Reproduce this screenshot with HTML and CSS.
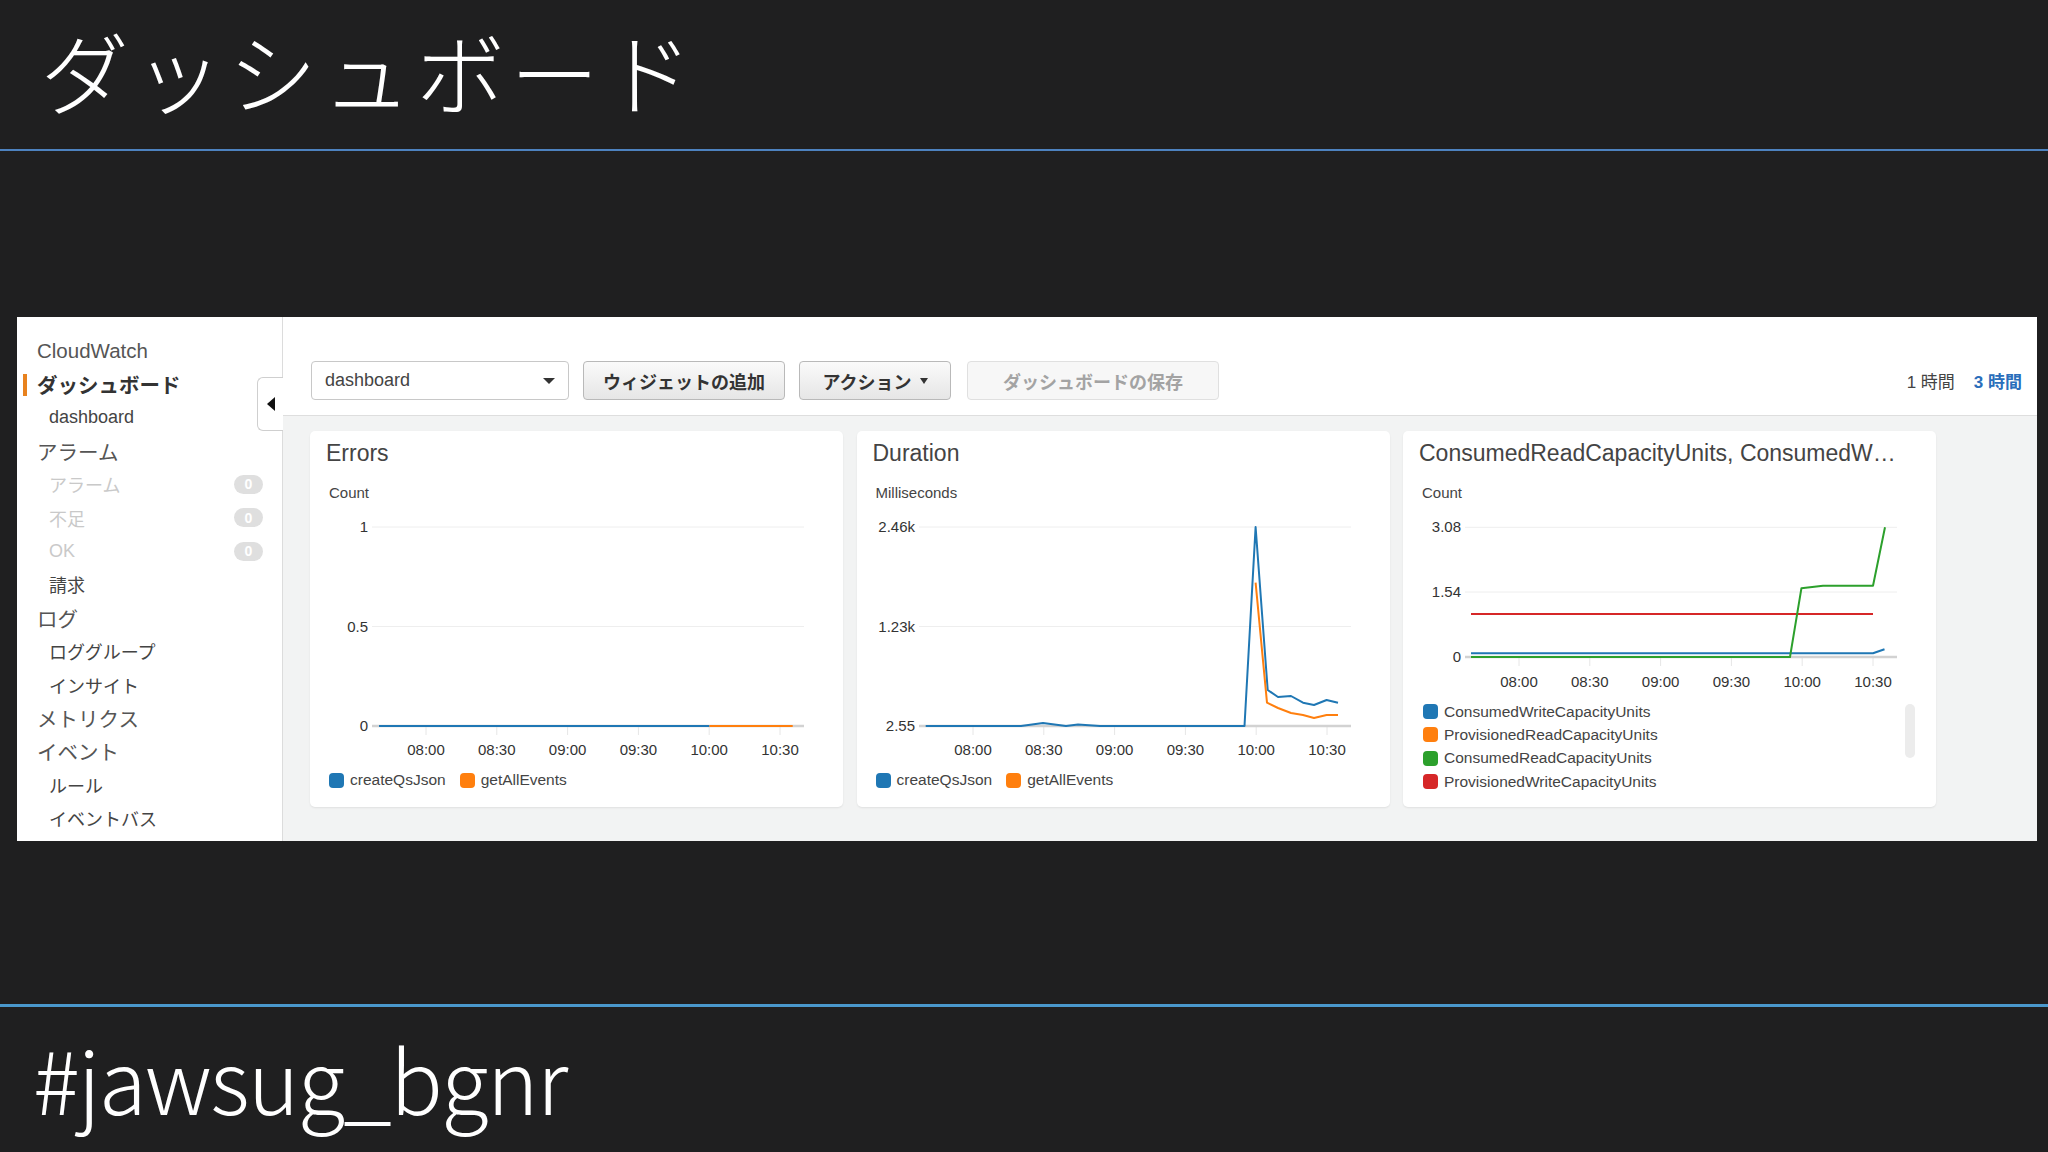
FILE: index.html
```html
<!DOCTYPE html>
<html lang="ja">
<head>
<meta charset="utf-8">
<title>ダッシュボード</title>
<link rel="stylesheet" href="styles.css">
</head>
<body>
<div class="slide">
  <header class="slide-head"><h1 class="slide-title">ダッシュボード</h1></header>
  <div class="rule rule-top"></div>
  <main class="stage">
    <div class="console">
      <nav class="sidebar">
        <div class="nav-item top">CloudWatch</div>
        <div class="nav-item top active">ダッシュボード</div>
        <div class="nav-item sub">dashboard</div>
        <div class="nav-item top">アラーム</div>
        <div class="nav-item sub muted">アラーム<span class="badge">0</span></div>
        <div class="nav-item sub muted">不足<span class="badge">0</span></div>
        <div class="nav-item sub muted">OK<span class="badge">0</span></div>
        <div class="nav-item sub">請求</div>
        <div class="nav-item top">ログ</div>
        <div class="nav-item sub">ロググループ</div>
        <div class="nav-item sub">インサイト</div>
        <div class="nav-item top">メトリクス</div>
        <div class="nav-item top">イベント</div>
        <div class="nav-item sub">ルール</div>
        <div class="nav-item sub">イベントバス</div>
        <div class="collapse-tab"><span class="tri"></span></div>
      </nav>
      <section class="main">
        <div class="toolbar">
          <div class="select">dashboard<span class="caret"></span></div>
          <button class="btn btn-add">ウィジェットの追加</button>
          <button class="btn btn-action">アクション<span class="caret-sm"></span></button>
          <button class="btn btn-save" disabled>ダッシュボードの保存</button>
          <div class="range"><span>1 時間</span><span class="on">3 時間</span></div>
        </div>
        <div class="widgets">
          <div class="card">
            <div class="card-title">Errors</div>
            <div class="card-unit">Count</div>
            <svg class="chart" width="533" height="260" viewBox="0 0 533 260">
              <g class="grid"><line x1="62" x2="494" y1="21" y2="21"/><line x1="62" x2="494" y1="120.5" y2="120.5"/></g>
              <g class="ticks"><line x1="116" x2="116" y1="221" y2="229"/><line x1="186.8" x2="186.8" y1="221" y2="229"/><line x1="257.6" x2="257.6" y1="221" y2="229"/><line x1="328.4" x2="328.4" y1="221" y2="229"/><line x1="399.2" x2="399.2" y1="221" y2="229"/><line x1="470" x2="470" y1="221" y2="229"/></g>
              <line class="axis" x1="62" x2="494" y1="220" y2="220"/>
              <g class="ylab"><text x="58" y="26">1</text><text x="58" y="125.5">0.5</text><text x="58" y="225">0</text></g>
              <g class="xlab"><text x="116" y="249">08:00</text><text x="186.8" y="249">08:30</text><text x="257.6" y="249">09:00</text><text x="328.4" y="249">09:30</text><text x="399.2" y="249">10:00</text><text x="470" y="249">10:30</text></g>
              <path class="s-blue" d="M69,220 H399.5"/>
              <path class="s-orange" d="M399.5,220 H482.7"/>
            </svg>
            <div class="legend">
              <span class="lg"><i class="sw c-blue"></i>createQsJson</span>
              <span class="lg"><i class="sw c-orange"></i>getAllEvents</span>
            </div>
          </div>
          <div class="card">
            <div class="card-title">Duration</div>
            <div class="card-unit">Milliseconds</div>
            <svg class="chart" width="533" height="260" viewBox="0 0 533 260">
              <g class="grid"><line x1="62" x2="494" y1="21" y2="21"/><line x1="62" x2="494" y1="120.5" y2="120.5"/></g>
              <g class="ticks"><line x1="116" x2="116" y1="221" y2="229"/><line x1="186.8" x2="186.8" y1="221" y2="229"/><line x1="257.6" x2="257.6" y1="221" y2="229"/><line x1="328.4" x2="328.4" y1="221" y2="229"/><line x1="399.2" x2="399.2" y1="221" y2="229"/><line x1="470" x2="470" y1="221" y2="229"/></g>
              <line class="axis" x1="62" x2="494" y1="220" y2="220"/>
              <g class="ylab"><text x="58" y="26">2.46k</text><text x="58" y="125.5">1.23k</text><text x="58" y="225">2.55</text></g>
              <g class="xlab"><text x="116" y="249">08:00</text><text x="186.8" y="249">08:30</text><text x="257.6" y="249">09:00</text><text x="328.4" y="249">09:30</text><text x="399.2" y="249">10:00</text><text x="470" y="249">10:30</text></g>
              <path class="s-blue" d="M68.7,220 L164,220 L186,217 L209,220 L221,218.5 L243,220 L387.5,220 L398.6,21 L410.7,184 L421,191 L434,190 L446,196.7 L457,199 L469.6,194 L481,196.7"/>
              <path class="s-orange" d="M398.6,76.7 L410,196.7 L421,202 L434,207 L446,209 L457,212 L469.6,209 L481,209"/>
            </svg>
            <div class="legend">
              <span class="lg"><i class="sw c-blue"></i>createQsJson</span>
              <span class="lg"><i class="sw c-orange"></i>getAllEvents</span>
            </div>
          </div>
          <div class="card">
            <div class="card-title">ConsumedReadCapacityUnits, ConsumedW…</div>
            <div class="card-unit">Count</div>
            <svg class="chart" width="533" height="194" viewBox="0 0 533 194">
              <g class="grid"><line x1="62" x2="494" y1="21.3" y2="21.3"/><line x1="62" x2="494" y1="86" y2="86"/></g>
              <g class="ticks"><line x1="116" x2="116" y1="152" y2="160"/><line x1="186.8" x2="186.8" y1="152" y2="160"/><line x1="257.6" x2="257.6" y1="152" y2="160"/><line x1="328.4" x2="328.4" y1="152" y2="160"/><line x1="399.2" x2="399.2" y1="152" y2="160"/><line x1="470" x2="470" y1="152" y2="160"/></g>
              <line class="axis" x1="62" x2="494" y1="151" y2="151"/>
              <g class="ylab"><text x="58" y="26.3">3.08</text><text x="58" y="91">1.54</text><text x="58" y="156">0</text></g>
              <g class="xlab"><text x="116" y="181">08:00</text><text x="186.8" y="181">08:30</text><text x="257.6" y="181">09:00</text><text x="328.4" y="181">09:30</text><text x="399.2" y="181">10:00</text><text x="470" y="181">10:30</text></g>
              <path class="s-blue" d="M68,147.3 H470 L481.5,143.3"/>
              <path class="s-red" d="M68,108 H470"/>
              <path class="s-green" d="M68,151 H387 L398.4,82.3 L420,79.7 L470,79.7 L482,21.3"/>
            </svg>
            <div class="legend-box">
              <div class="legend-list">
                <span class="lg"><i class="sw c-blue"></i>ConsumedWriteCapacityUnits</span>
                <span class="lg"><i class="sw c-orange"></i>ProvisionedReadCapacityUnits</span>
                <span class="lg"><i class="sw c-green"></i>ConsumedReadCapacityUnits</span>
                <span class="lg"><i class="sw c-red"></i>ProvisionedWriteCapacityUnits</span>
              </div>
              <div class="scroll-thumb"></div>
            </div>
          </div>
        </div>
      </section>
    </div>
  </main>
  <div class="rule rule-bottom"></div>
  <footer class="slide-foot">#jawsug_bgnr</footer>
</div>
</body>
</html>
```

FILE: styles.css
```css
* { box-sizing: border-box; }
html, body { margin: 0; padding: 0; }
body {
  width: 2048px;
  height: 1152px;
  overflow: hidden;
  background: #1f1f20;
  font-family: "Liberation Sans", "Noto Sans CJK JP", sans-serif;
}
.slide {
  width: 2048px;
  height: 1152px;
  display: flex;
  flex-direction: column;
  background: #1f1f20;
}
.slide-head {
  height: 149px;
  flex: none;
  padding: 25px 0 0 40px;
}
.slide-title {
  margin: 0;
  font-family: "Noto Sans CJK JP", sans-serif;
  font-weight: 300;
  font-size: 89px;
  line-height: 89px;
  letter-spacing: 5px;
  color: #ffffff;
}
.rule { flex: none; }
.rule-top { height: 2px; background: #4d82bf; }
.rule-bottom { height: 3px; background: #4a98cc; }
.stage {
  height: 853px;
  flex: none;
  padding: 166px 11px 0 17px;
}
.console {
  width: 2020px;
  height: 524px;
  background: #ffffff;
  display: flex;
}
.slide-foot {
  flex: 1;
  padding: 27px 0 0 33px;
  font-family: "Noto Sans CJK JP", sans-serif;
  font-weight: 300;
  font-size: 87px;
  line-height: 87px;
  letter-spacing: -1.5px;
  color: #ffffff;
}

/* sidebar */
.sidebar {
  position: relative;
  width: 266px;
  flex: none;
  border-right: 1px solid #dcdcdc;
  padding-top: 17px;
}
.nav-item {
  height: 33.4px;
  display: flex;
  align-items: center;
  white-space: nowrap;
  color: #555555;
}
.nav-item.top { padding-left: 20px; font-size: 20.5px; }
.nav-item.sub { padding-left: 32px; font-size: 18px; color: #444444; }
.nav-item.muted { color: #c9c9c9; }
.nav-item.active { position: relative; font-weight: bold; color: #333333; }
.nav-item.active::before {
  content: "";
  position: absolute;
  left: 6px;
  top: 50%;
  margin-top: -10px;
  width: 4px;
  height: 22px;
  background: #e8821e;
}
.badge {
  margin-left: auto;
  margin-right: 19px;
  width: 29px;
  height: 19px;
  border-radius: 10px;
  background: #dfdfdf;
  color: #ffffff;
  font-size: 14px;
  font-weight: bold;
  display: flex;
  align-items: center;
  justify-content: center;
}
.collapse-tab {
  position: absolute;
  left: 240px;
  top: 60px;
  width: 26px;
  height: 54px;
  background: #ffffff;
  border: 1px solid #cfcfcf;
  border-right: none;
  border-radius: 6px 0 0 6px;
  display: flex;
  align-items: center;
  padding-left: 9px;
}
.tri {
  width: 0;
  height: 0;
  border-top: 7px solid transparent;
  border-bottom: 7px solid transparent;
  border-right: 8px solid #111111;
}

/* main */
.main {
  flex: 1;
  min-width: 0;
  display: flex;
  flex-direction: column;
}
.toolbar {
  height: 99px;
  flex: none;
  display: flex;
  align-items: center;
  padding: 44px 15px 15px 28px;
  border-bottom: 1px solid #dedede;
}
.select {
  width: 258px;
  height: 39px;
  border: 1px solid #c8c8c8;
  border-radius: 4px;
  display: flex;
  align-items: center;
  padding: 0 13px;
  font-size: 18px;
  color: #444444;
}
.caret {
  margin-left: auto;
  width: 0;
  height: 0;
  border-left: 6px solid transparent;
  border-right: 6px solid transparent;
  border-top: 6px solid #333333;
}
.btn {
  height: 39px;
  margin-left: 14px;
  padding: 0;
  border: 1px solid #b9b9b9;
  border-radius: 4px;
  background: linear-gradient(#fafafa, #e6e6e6);
  font-family: "Liberation Sans", "Noto Sans CJK JP", sans-serif;
  font-size: 18px;
  font-weight: bold;
  color: #333333;
  display: flex;
  align-items: center;
  justify-content: center;
}
.btn-add { width: 202px; }
.btn-action { width: 152px; gap: 8px; }
.caret-sm {
  width: 0;
  height: 0;
  border-left: 4px solid transparent;
  border-right: 4px solid transparent;
  border-top: 6px solid #333333;
}
.btn-save {
  width: 252px;
  margin-left: 16px;
  color: #a3a3a3;
  background: #f7f7f7;
  border-color: #e0e0e0;
}
.range {
  margin-left: auto;
  display: flex;
  gap: 19px;
  font-size: 17px;
  color: #444444;
}
.range .on { color: #2a6ebb; font-weight: bold; }

.widgets {
  flex: 1;
  background: #f2f3f3;
  display: flex;
  align-items: flex-start;
  gap: 13.5px;
  padding: 15px 0 0 27px;
}
.card {
  width: 533px;
  height: 376px;
  flex: none;
  background: #ffffff;
  border-radius: 5px;
  box-shadow: 0 1px 2px rgba(0, 0, 0, 0.08);
  display: flex;
  flex-direction: column;
}
.card-title {
  padding: 7px 20px 0 16px;
  font-size: 23px;
  line-height: 30px;
  color: #444444;
  white-space: nowrap;
}
.card-unit {
  margin-top: 14px;
  padding-left: 19px;
  font-size: 15px;
  line-height: 22px;
  color: #444444;
}
.chart { display: block; margin-top: 2px; flex: none; }
.chart text {
  font-family: "Liberation Sans", sans-serif;
  font-size: 15px;
  fill: #333333;
}
.ylab text { text-anchor: end; }
.xlab text { text-anchor: middle; }
.grid line { stroke: #eeeeee; stroke-width: 1; }
.ticks line { stroke: #e6e6e6; stroke-width: 1; }
.axis { stroke: #d2d2d2; stroke-width: 2.5; }
.chart path { fill: none; stroke-width: 2; stroke-linejoin: round; }
.s-blue { stroke: #1f77b4; }
.s-orange { stroke: #ff7f0e; }
.s-green { stroke: #2ca02c; }
.s-red { stroke: #d62728; }

.legend {
  height: 28px;
  display: flex;
  align-items: center;
  padding-left: 19px;
  font-size: 15.5px;
  color: #444444;
}
.lg { display: flex; align-items: center; margin-right: 14px; white-space: nowrap; }
.sw { width: 15px; height: 15px; border-radius: 4px; margin-right: 6px; flex: none; }
.c-blue { background: #1f77b4; }
.c-orange { background: #ff7f0e; }
.c-green { background: #2ca02c; }
.c-red { background: #d62728; }

.legend-box {
  display: flex;
  align-items: flex-start;
  padding-left: 20px;
  font-size: 15.5px;
  color: #444444;
}
.legend-list { flex: 1; display: flex; flex-direction: column; }
.legend-list .lg { height: 23.3px; }
.scroll-thumb {
  width: 10px;
  height: 54px;
  margin: 4px 21px 0 0;
  border-radius: 5px;
  background: #ececec;
}
```
